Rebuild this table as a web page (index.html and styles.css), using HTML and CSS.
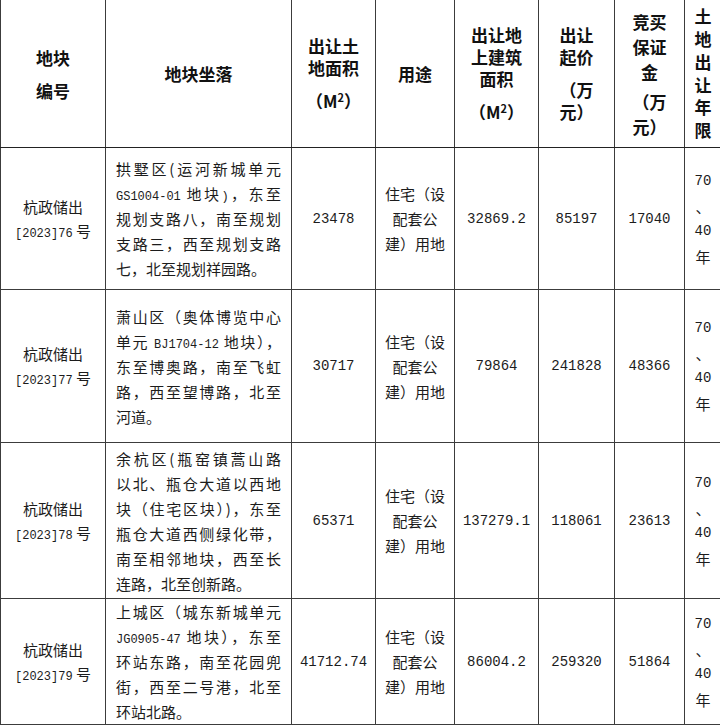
FILE: index.html
```html
<!DOCTYPE html>
<html lang="zh-CN">
<head>
<meta charset="utf-8">
<title>出让地块</title>
<link rel="stylesheet" href="styles.css">
</head>
<body>
<table class="land">
  <colgroup>
    <col class="c1"><col class="c2"><col class="c3"><col class="c4"><col class="c5"><col class="c6"><col class="c7"><col class="c8">
  </colgroup>
  <thead>
    <tr class="r0">
      <th class="h-id"><div>地块</div><div>编号</div></th>
      <th>地块坐落</th>
      <th class="h-std"><div>出让土</div><div>地面积</div><div class="gap">（M<sup>2</sup>）</div></th>
      <th>用途</th>
      <th class="h-std"><div>出让地</div><div>上建筑</div><div>面积</div><div class="gap">（M<sup>2</sup>）</div></th>
      <th class="h-price"><div>出让</div><div>起价</div><div class="gap">（万</div><div>元）</div></th>
      <th class="h-dep"><div>竞买</div><div>保证</div><div>金</div><div class="gap2">（万</div><div>元）</div></th>
      <th class="h-year"><div>土</div><div>地</div><div>出</div><div>让</div><div>年</div><div>限</div></th>
    </tr>
  </thead>
  <tbody>
    <tr class="r1">
      <td class="id"><div>杭政储出</div><div><span class="mono-s">[2023]76</span> 号</div></td>
      <td class="addr">
        <div class="l">拱墅区(运河新城单元</div>
        <div class="l"><span class="lat">GS1004-01</span> 地块<span class="lat">)</span>，东至</div>
        <div class="l">规划支路八，南至规划</div>
        <div class="l">支路三，西至规划支路</div>
        <div class="e">七，北至规划祥园路。</div>
      </td>
      <td class="num">23478</td>
      <td class="use"><div>住宅（设</div><div>配套公</div><div>建）用地</div></td>
      <td class="num">32869.2</td>
      <td class="num">85197</td>
      <td class="num">17040</td>
      <td class="yr"><div class="mono">70</div><div>、</div><div class="mono">40</div><div>年</div></td>
    </tr>
    <tr class="r2">
      <td class="id"><div>杭政储出</div><div><span class="mono-s">[2023]77</span> 号</div></td>
      <td class="addr">
        <div class="l">萧山区（奥体博览中心</div>
        <div class="l">单元 <span class="lat">BJ1704-12</span> 地块），</div>
        <div class="l">东至博奥路，南至飞虹</div>
        <div class="l">路，西至望博路，北至</div>
        <div class="e">河道。</div>
      </td>
      <td class="num">30717</td>
      <td class="use"><div>住宅（设</div><div>配套公</div><div>建）用地</div></td>
      <td class="num">79864</td>
      <td class="num">241828</td>
      <td class="num">48366</td>
      <td class="yr"><div class="mono">70</div><div>、</div><div class="mono">40</div><div>年</div></td>
    </tr>
    <tr class="r3">
      <td class="id"><div>杭政储出</div><div><span class="mono-s">[2023]78</span> 号</div></td>
      <td class="addr">
        <div class="l">余杭区(瓶窑镇蒿山路</div>
        <div class="l">以北、瓶仓大道以西地</div>
        <div class="l">块（住宅区块）)，东至</div>
        <div class="l">瓶仓大道西侧绿化带，</div>
        <div class="l">南至相邻地块，西至长</div>
        <div class="e">连路，北至创新路。</div>
      </td>
      <td class="num">65371</td>
      <td class="use"><div>住宅（设</div><div>配套公</div><div>建）用地</div></td>
      <td class="num">137279.1</td>
      <td class="num">118061</td>
      <td class="num">23613</td>
      <td class="yr"><div class="mono">70</div><div>、</div><div class="mono">40</div><div>年</div></td>
    </tr>
    <tr class="r4">
      <td class="id"><div>杭政储出</div><div><span class="mono-s">[2023]79</span> 号</div></td>
      <td class="addr">
        <div class="l">上城区（城东新城单元</div>
        <div class="l"><span class="lat">JG0905-47</span> 地块），东至</div>
        <div class="l">环站东路，南至花园兜</div>
        <div class="l">街，西至二号港，北至</div>
        <div class="e">环站北路。</div>
      </td>
      <td class="num">41712.74</td>
      <td class="use"><div>住宅（设</div><div>配套公</div><div>建）用地</div></td>
      <td class="num">86004.2</td>
      <td class="num">259320</td>
      <td class="num">51864</td>
      <td class="yr"><div class="mono">70</div><div>、</div><div class="mono">40</div><div>年</div></td>
    </tr>
  </tbody>
</table>
</body>
</html>
```

FILE: styles.css
```css
html, body {
  margin: 0;
  padding: 0;
  background: #ffffff;
  overflow: hidden;
}

body {
  font-family: "Noto Sans CJK SC", "Noto Sans", sans-serif;
  color: #1c1c1c;
  font-size: 15px;
}

.land {
  border-collapse: collapse;
  table-layout: fixed;
  width: 721px;
  margin-top: -1px;
}

.c1 { width: 105px; }
.c2 { width: 186px; }
.c3 { width: 84px; }
.c4 { width: 79px; }
.c5 { width: 84px; }
.c6 { width: 76px; }
.c7 { width: 70px; }
.c8 { width: 37px; }

.land th,
.land td {
  border: 1px solid #3c3c3c;
  padding: 0;
  text-align: center;
  vertical-align: middle;
}

.land thead th {
  border-bottom-color: #222;
  font-size: 17px;
  font-weight: 700;
  line-height: 22px;
  color: #111;
}

.land sup {
  font-size: 11px;
  line-height: 0;
  vertical-align: 6px;
}

.r0 { height: 148px; }
.r1 { height: 142px; }
.r2 { height: 153px; }
.r3 { height: 156px; }
.r4 { height: 126px; }

.land .h-id { line-height: 33px; }
.land .h-std { line-height: 22px; }
.gap { margin-top: 11px; }
.gap2 { margin-top: 5px; }
.land .h-price { line-height: 22px; }
.land .h-dep { line-height: 25px; }
.land .h-year { line-height: 22.8px; }

.id {
  line-height: 24px;
}

.mono-s {
  font-family: "Liberation Mono", monospace;
  font-size: 12px;
  line-height: 12px;
}

.land .addr {
  padding: 0 10px 0 10px;
  line-height: 25px;
}

.addr .l,
.addr .e {
  height: 25px;
}

.addr .l {
  text-align: justify;
  text-align-last: justify;
  white-space: nowrap;
}

.addr .e {
  text-align: left;
}

.lat {
  font-family: "Liberation Mono", monospace;
  font-size: 12px;
  line-height: 12px;
}

.num {
  font-family: "Liberation Mono", monospace;
  font-size: 14px;
}

.use {
  line-height: 25px;
}

.yr {
  line-height: 25px;
}

.mono {
  font-family: "Liberation Mono", monospace;
  font-size: 14px;
}
```
